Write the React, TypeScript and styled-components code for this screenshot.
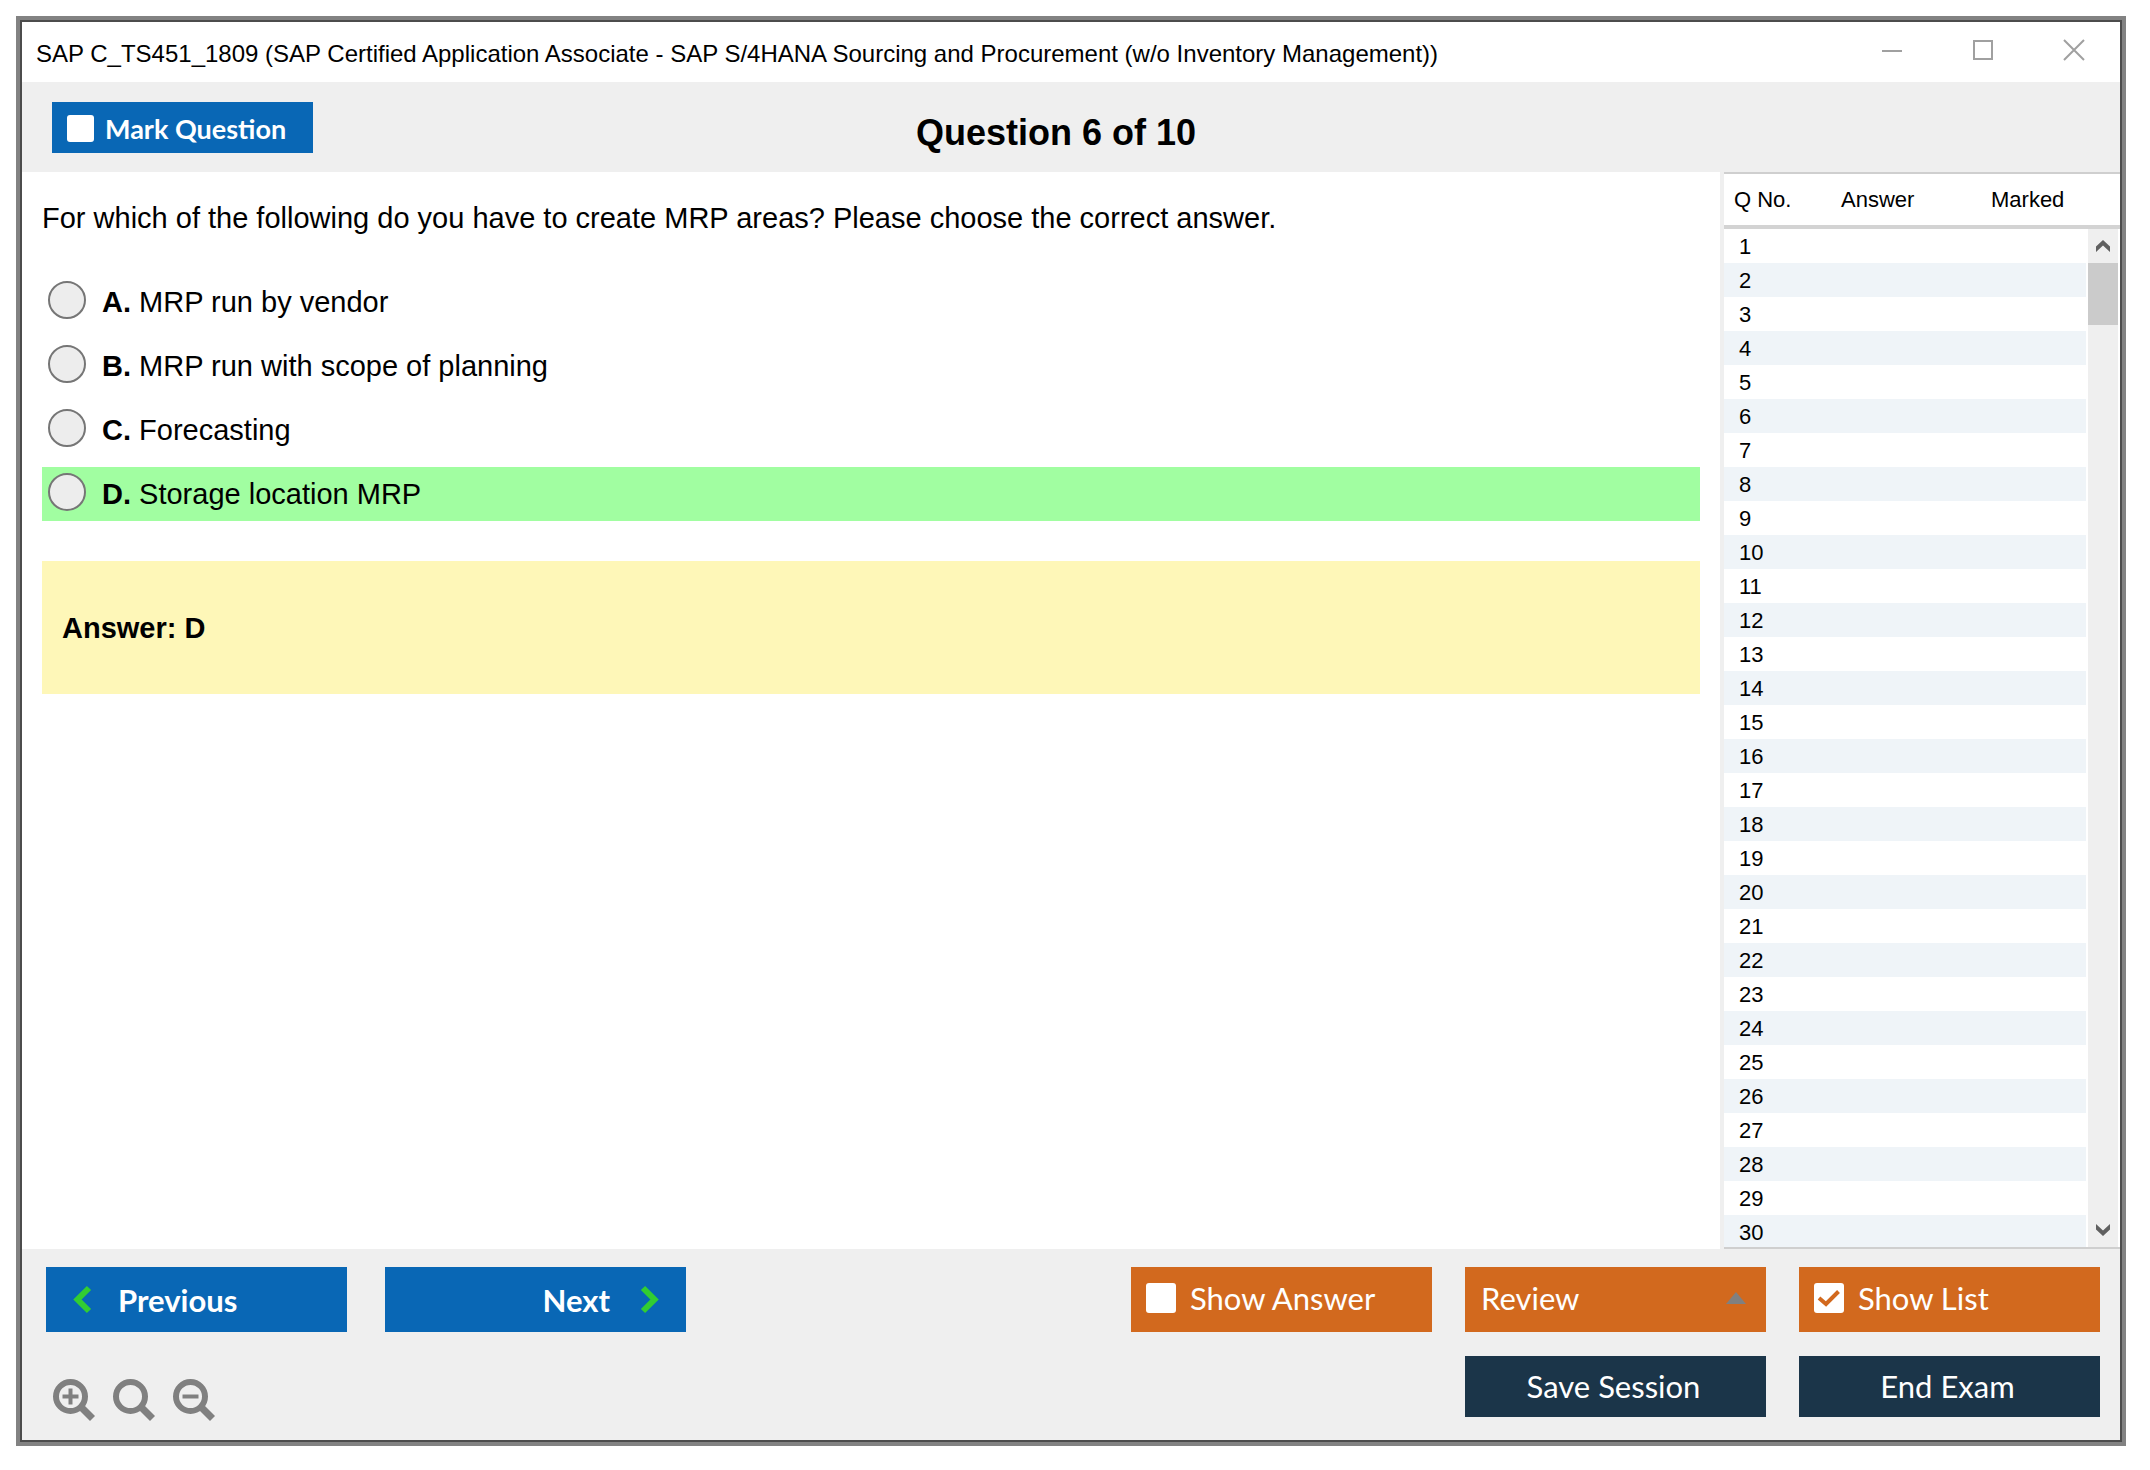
import React, { useRef, useState } from "react";
import styled, { createGlobalStyle } from "styled-components";

const sans = `"Liberation Sans", Arial, sans-serif`;
const humanist = `Lato, Calibri, sans-serif`;

const GlobalStyle = createGlobalStyle`
  *, *::before, *::after { box-sizing: border-box; }
  body { margin: 0; background: #fff; color: #000; font-family: ${sans}; }
  button, select, input { font: inherit; margin: 0; }
`;

const Page = styled.div`
  display: flex;
  height: 100vh;
  padding: 16px 24px 24px 16px;
`;

const Frame = styled.div`
  flex: 1;
  display: flex;
  border: 4px solid #828282;
`;

const Window = styled.div`
  flex: 1;
  min-width: 0;
  display: flex;
  flex-direction: column;
  border: 2px solid #4c4c4c;
  background: #fff;
`;

const TitleBar = styled.header`
  display: flex;
  align-items: center;
  justify-content: space-between;
  flex: none;
  height: 60px;
  padding: 0 35px 0 14px;
`;

const Title = styled.span`
  font-size: 24px;
  line-height: 28px;
  padding-top: 4px;
`;

const WindowControls = styled.div`
  display: flex;
  gap: 69px;
  padding-bottom: 4px;
`;

const PlainButton = styled.button`
  display: flex;
  align-items: center;
  justify-content: center;
  padding: 0;
  border: 0;
  background: none;
  cursor: pointer;
`;

const Toolbar = styled.div`
  flex: none;
  display: grid;
  grid-template-columns: 1fr auto 1fr;
  align-items: center;
  height: 90px;
  padding: 0 60px 0 30px;
  background: #efefef;
`;

const Heading = styled.h1`
  margin: 0;
  padding-top: 12px;
  font-size: 36px;
  line-height: 40px;
`;

const tones = { blue: "#0967b5", orange: "#d2691e", navy: "#1b3549" };

const CheckLabel = styled.label`
  display: flex;
  align-items: center;
  gap: 14px;
  padding: 0 15px 3px;
  background: ${tones.orange};
  color: #fff;
  font-family: ${humanist};
  font-size: 31px;
  cursor: pointer;
`;

const MarkLabel = styled(CheckLabel)`
  justify-self: start;
  gap: 11px;
  width: 261px;
  height: 51px;
  padding: 2px 15px 0;
  background: ${tones.blue};
  font-size: 27px;
  font-weight: 700;
`;

const CheckBoxWrap = styled.span<{ $size: number }>`
  display: grid;
  width: ${(p) => p.$size}px;
  height: ${(p) => p.$size}px;
  > * { grid-area: 1 / 1; }
  svg { pointer-events: none; }
`;

const CheckInput = styled.input`
  appearance: none;
  width: 100%;
  height: 100%;
  border-radius: 3px;
  background: #fff;
  cursor: pointer;
`;

const Main = styled.main`
  flex: 1;
  min-height: 0;
  display: grid;
  grid-template-columns: 1fr 400px;
`;

const QuestionPane = styled.section`
  padding: 27px 20px;
  font-size: 29px;
  line-height: 38px;
`;

const QuestionText = styled.p`
  margin: 0 0 38px;
`;

const Options = styled.div`
  display: grid;
  gap: 10px;
`;

const Option = styled.label<{ $correct?: boolean }>`
  display: flex;
  align-items: center;
  gap: 16px;
  height: 54px;
  padding: 0 6px 4px;
  background: ${(p) => (p.$correct ? "#a1fea1" : "transparent")};
  cursor: pointer;
`;

const Radio = styled.input`
  appearance: none;
  width: 38px;
  height: 38px;
  border: 2px solid #767676;
  border-radius: 50%;
  background: #ededed;
  &:checked { box-shadow: inset 0 0 0 8px #ededed; background: #333; }
`;

const OptionText = styled.span`
  padding-top: 4px;
`;

const AnswerBox = styled.div`
  margin-top: 40px;
  padding: 48px 20px 47px;
  background: #fef7b8;
  font-weight: 700;
`;

const ListPane = styled.aside`
  position: relative;
  min-height: 0;
  display: flex;
  border: solid #efefef;
  border-width: 0 0 0 4px;
`;

const ListScroller = styled.div`
  flex: 1;
  overflow: hidden;
  border: solid #cfcfcf;
  border-width: 2px 0;
`;

const ListTable = styled.table`
  width: 100%;
  table-layout: fixed;
  border-collapse: separate;
  border-spacing: 0;
  font-size: 22px;
  line-height: 26px;
`;

const HeadCell = styled.th<{ $width?: number }>`
  position: sticky;
  top: 0;
  width: ${(p) => (p.$width ? `${p.$width}px` : "auto")};
  height: 55px;
  padding: 0 0 0 10px;
  border-bottom: 4px solid #d3d3d3;
  background: #fff;
  font-weight: 400;
  text-align: left;
`;

const Row = styled.tr`
  height: 34px;
  &:nth-child(even) td { background: #eff4f8; }
`;

const Cell = styled.td`
  padding: 2px 0 0 15px;
`;

const ScrollBar = styled.div`
  position: absolute;
  top: 57px;
  right: 0;
  bottom: 2px;
  width: 34px;
  display: flex;
  flex-direction: column;
  border: solid #fff;
  border-width: 0 2px;
  background: #efefef;
`;

const ScrollButton = styled(PlainButton)`
  height: 34px;
`;

const ScrollTrack = styled.div`
  flex: 1;
`;

const ScrollThumb = styled.div`
  height: 62px;
  background: #cbcbcb;
`;

const Footer = styled.footer`
  flex: none;
  display: flex;
  justify-content: space-between;
  height: 191px;
  padding: 18px 20px 0 24px;
  background: #efefef;
`;

const FooterGrid = styled.div<{ $columns: number; $gap: number }>`
  display: grid;
  grid-template-columns: repeat(${(p) => p.$columns}, 301px);
  grid-template-rows: 65px 61px;
  gap: 24px ${(p) => p.$gap}px;
`;

const NavButton = styled.button<{ $end?: boolean }>`
  display: flex;
  align-items: center;
  justify-content: ${(p) => (p.$end ? "flex-end" : "flex-start")};
  gap: ${(p) => (p.$end ? 30 : 26)}px;
  padding: 0 26px;
  border: 0;
  background: ${tones.blue};
  color: #fff;
  font-family: ${humanist};
  font-size: 31px;
  font-weight: 700;
  cursor: pointer;
`;

const SessionButton = styled.button<{ $column: number }>`
  grid-column: ${(p) => p.$column};
  padding: 0 4px 2px 0;
  border: 0;
  background: ${tones.navy};
  color: #fff;
  font-family: ${humanist};
  font-size: 31px;
  cursor: pointer;
`;

const SelectWrap = styled.div`
  display: grid;
  align-items: center;
  > * { grid-area: 1 / 1; }
  svg { justify-self: end; margin: 0 20px 3px 0; pointer-events: none; }
`;

const ReviewSelect = styled.select`
  appearance: none;
  width: 100%;
  height: 100%;
  padding: 0 16px 3px;
  border: 0;
  border-radius: 0;
  background: ${tones.orange};
  color: #fff;
  font-family: ${humanist};
  font-size: 31px;
  cursor: pointer;
`;

const ZoomTools = styled.div`
  display: flex;
  align-items: center;
  gap: 18px;
  padding: 26px 0 0 7px;
`;

const Tick = () => (
  <svg width="30" height="30" viewBox="0 0 30 30" fill="none" stroke="#d2691e" strokeWidth="4">
    <path d="M5 15 12 21 24.500 8.500" />
  </svg>
);

const Chevron = ({ left }: { left?: boolean }) => (
  <svg width="20" height="30" viewBox="0 0 20 30" fill="none" stroke="#32cd32" strokeWidth="6">
    <path d={left ? "M17 3 5.500 14.500 17 26" : "M3 3 14.500 14.500 3 26"} />
  </svg>
);

const Magnifier = ({ sign }: { sign?: "+" | "-" }) => (
  <svg width="42" height="42" viewBox="0 0 42 42" fill="none" stroke="#808080">
    <circle cx="17.500" cy="17.500" r="14.500" strokeWidth="6" />
    <path d="M27 27 39.500 39.500" strokeWidth="7" />
    {sign && <path d="M9.500 17.500h16" strokeWidth="4" />}
    {sign === "+" && <path d="M17.500 9.500v16" strokeWidth="4" />}
  </svg>
);

const ScrollArrow = ({ down }: { down?: boolean }) => (
  <svg width="16" height="14" viewBox="0 0 16 14" fill="#606060">
    <path d={down ? "M1 1 8 7.500 15 1V6.500L8 13 1 6.500z" : "M1 13 8 6.500 15 13V7.500L8 1 1 7.500z"} />
  </svg>
);

const options = [
  { letter: "A", text: "MRP run by vendor" },
  { letter: "B", text: "MRP run with scope of planning" },
  { letter: "C", text: "Forecasting" },
  { letter: "D", text: "Storage location MRP", correct: true },
];

const questionNumbers = Array.from({ length: 30 }, (_, i) => i + 1);

export default function App() {
  const [choice, setChoice] = useState("");
  const scroller = useRef<HTMLDivElement>(null);
  const scroll = (dy: number) => scroller.current?.scrollBy({ top: dy });

  return (
    <>
      <GlobalStyle />
      <Page>
        <Frame>
          <Window>
            <TitleBar>
              <Title>SAP C_TS451_1809 (SAP Certified Application Associate - SAP S/4HANA Sourcing and Procurement (w/o Inventory Management))</Title>
              <WindowControls>
                <PlainButton aria-label="Minimize">
                  <svg width="22" height="22" viewBox="0 0 22 22" stroke="#a0a0a0" strokeWidth="2"><path d="M1 12h20" /></svg>
                </PlainButton>
                <PlainButton aria-label="Maximize">
                  <svg width="22" height="22" viewBox="0 0 22 22" fill="none" stroke="#a0a0a0" strokeWidth="2"><path d="M2 2h18v18H2z" /></svg>
                </PlainButton>
                <PlainButton aria-label="Close">
                  <svg width="22" height="22" viewBox="0 0 22 22" stroke="#a0a0a0" strokeWidth="2"><path d="M1 1 21 21M21 1 1 21" /></svg>
                </PlainButton>
              </WindowControls>
            </TitleBar>

            <Toolbar>
              <MarkLabel>
                <CheckBoxWrap $size={27}><CheckInput type="checkbox" /></CheckBoxWrap>
                Mark Question
              </MarkLabel>
              <Heading>Question 6 of 10</Heading>
            </Toolbar>

            <Main>
              <QuestionPane>
                <QuestionText>For which of the following do you have to create MRP areas? Please choose the correct answer.</QuestionText>
                <Options role="radiogroup" aria-label="Answers">
                  {options.map((o) => (
                    <Option key={o.letter} $correct={o.correct}>
                      <Radio type="radio" name="answer" checked={choice === o.letter} onChange={() => setChoice(o.letter)} />
                      <OptionText><b>{o.letter}.</b> {o.text}</OptionText>
                    </Option>
                  ))}
                </Options>
                <AnswerBox>Answer: D</AnswerBox>
              </QuestionPane>

              <ListPane>
                <ListScroller ref={scroller}>
                  <ListTable>
                    <thead>
                      <tr>
                        <HeadCell $width={107}>Q No.</HeadCell>
                        <HeadCell $width={150}>Answer</HeadCell>
                        <HeadCell>Marked</HeadCell>
                      </tr>
                    </thead>
                    <tbody>
                      {questionNumbers.map((n) => (
                        <Row key={n}><Cell>{n}</Cell><Cell /><Cell /></Row>
                      ))}
                    </tbody>
                  </ListTable>
                </ListScroller>
                <ScrollBar>
                  <ScrollButton aria-label="Scroll up" onClick={() => scroll(-34)}><ScrollArrow /></ScrollButton>
                  <ScrollTrack><ScrollThumb /></ScrollTrack>
                  <ScrollButton aria-label="Scroll down" onClick={() => scroll(34)}><ScrollArrow down /></ScrollButton>
                </ScrollBar>
              </ListPane>
            </Main>

            <Footer>
              <FooterGrid $columns={2} $gap={38}>
                <NavButton><Chevron left />Previous</NavButton>
                <NavButton $end>Next<Chevron /></NavButton>
                <ZoomTools>
                  <PlainButton aria-label="Zoom in"><Magnifier sign="+" /></PlainButton>
                  <PlainButton aria-label="Reset zoom"><Magnifier /></PlainButton>
                  <PlainButton aria-label="Zoom out"><Magnifier sign="-" /></PlainButton>
                </ZoomTools>
              </FooterGrid>
              <FooterGrid $columns={3} $gap={33}>
                <CheckLabel>
                  <CheckBoxWrap $size={30}><CheckInput type="checkbox" /></CheckBoxWrap>
                  Show Answer
                </CheckLabel>
                <SelectWrap>
                  <ReviewSelect aria-label="Review"><option>Review</option></ReviewSelect>
                  <svg width="20" height="12" viewBox="0 0 20 12" fill="#808080"><path d="M10 0 20 12H0z" /></svg>
                </SelectWrap>
                <CheckLabel>
                  <CheckBoxWrap $size={30}><CheckInput type="checkbox" defaultChecked /><Tick /></CheckBoxWrap>
                  Show List
                </CheckLabel>
                <SessionButton $column={2}>Save Session</SessionButton>
                <SessionButton $column={3}>End Exam</SessionButton>
              </FooterGrid>
            </Footer>
          </Window>
        </Frame>
      </Page>
    </>
  );
}
